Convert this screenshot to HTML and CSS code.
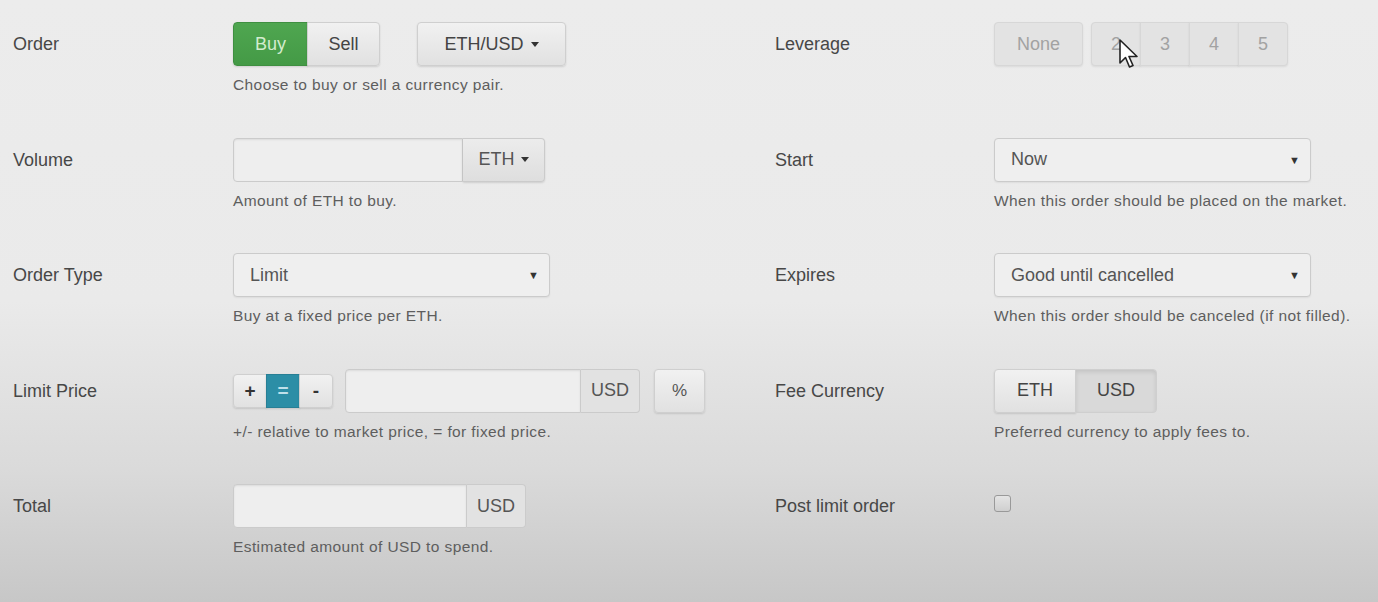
FILE: index.html
```html
<!DOCTYPE html>
<html lang="en">
<head>
  <meta charset="UTF-8" />
  <title>Place Order</title>
  <link rel="stylesheet" href="styles.css">
</head>
<body>

<div class="order-form">
  <div class="column">
    <div class="field">
      <div class="label">Order</div>
      <div class="control">
        <div class="line">
          <div class="btn-group">
            <button class="btn btn-success">Buy</button>
            <button class="btn">Sell</button>
          </div>
          <button class="btn pair-btn">ETH/USD <span class="caret"></span></button>
        </div>
        <div class="help">Choose to buy or sell a currency pair.</div>
      </div>
    </div>

    <div class="field">
      <div class="label">Volume</div>
      <div class="control">
        <div class="input-group w-volume">
          <input type="text" class="input">
          <button class="addon addon-btn">ETH <span class="caret"></span></button>
        </div>
        <div class="help">Amount of ETH to buy.</div>
      </div>
    </div>

    <div class="field">
      <div class="label">Order Type</div>
      <div class="control">
        <div class="select w-select">Limit <span class="arrow">▼</span></div>
        <div class="help">Buy at a fixed price per ETH.</div>
      </div>
    </div>

    <div class="field">
      <div class="label">Limit Price</div>
      <div class="control">
        <div class="line">
          <div class="btn-group btn-group-sm">
            <button class="btn">+</button>
            <button class="btn btn-info">=</button>
            <button class="btn">-</button>
          </div>
          <div class="input-group w-price">
            <input type="text" class="input">
            <span class="addon">USD</span>
          </div>
          <button class="btn pct-btn">%</button>
        </div>
        <div class="help">+/- relative to market price, = for fixed price.</div>
      </div>
    </div>

    <div class="field">
      <div class="label">Total</div>
      <div class="control">
        <div class="input-group w-total">
          <input type="text" class="input">
          <span class="addon">USD</span>
        </div>
        <div class="help">Estimated amount of USD to spend.</div>
      </div>
    </div>
  </div>

  <div class="column">
    <div class="field">
      <div class="label">Leverage</div>
      <div class="control">
        <div class="line lev-line">
          <button class="btn btn-disabled lev-none">None</button>
          <div class="btn-group">
            <button class="btn btn-disabled lev-num">2</button>
            <button class="btn btn-disabled lev-num">3</button>
            <button class="btn btn-disabled lev-num">4</button>
            <button class="btn btn-disabled lev-num">5</button>
          </div>
        </div>
      </div>
    </div>

    <div class="field">
      <div class="label">Start</div>
      <div class="control">
        <div class="select w-select">Now <span class="arrow">▼</span></div>
        <div class="help">When this order should be placed on the market.</div>
      </div>
    </div>

    <div class="field">
      <div class="label">Expires</div>
      <div class="control">
        <div class="select w-select">Good until cancelled <span class="arrow">▼</span></div>
        <div class="help">When this order should be canceled (if not filled).</div>
      </div>
    </div>

    <div class="field">
      <div class="label">Fee Currency</div>
      <div class="control">
        <div class="btn-group">
          <button class="btn fee-btn">ETH</button>
          <button class="btn fee-btn btn-active">USD</button>
        </div>
        <div class="help">Preferred currency to apply fees to.</div>
      </div>
    </div>

    <div class="field">
      <div class="label">Post limit order</div>
      <div class="control">
        <span class="checkbox"></span>
      </div>
    </div>
  </div>
</div>

<!-- mouse pointer over the leverage buttons -->
<svg class="cursor" width="22" height="32" viewBox="0 0 22 32">
  <path d="M1 1 L1 24 L6.5 18.5 L10.5 28 L14 26.5 L10 17.5 L18 17.5 Z" fill="#fff" stroke="#222" stroke-width="1.6" stroke-linejoin="round"/>
</svg>

</body>
</html>
```

FILE: styles.css
```css
body {
  margin: 0;
  height: 602px;
  overflow: hidden;
  font-family: "Liberation Sans", Arial, sans-serif;
  color: #444;
  background: linear-gradient(to bottom, #ececec 0%, #eaeaea 50%, #dadada 78%, #c7c7c7 100%);
}

.order-form {
  display: grid;
  grid-template-columns: 762px 1fr;
  padding: 22px 0 0 13px;
}

.field {
  display: flex;
  align-items: flex-start;
  height: 115.5px;
}

.label {
  width: 220px;
  flex: none;
  font-size: 18px;
  line-height: 44px;
  color: #474747;
}

.column + .column .label {
  width: 219px;
}

.line {
  display: flex;
  align-items: center;
  height: 44px;
}

.help {
  margin-top: 9px;
  font-size: 15.5px;
  letter-spacing: 0.4px;
  line-height: 20px;
  color: #5e5e5e;
}

/* buttons */
.btn {
  font-family: inherit;
  font-size: 18px;
  height: 44px;
  padding: 0 14px;
  color: #444;
  background: linear-gradient(to bottom, #f1f1f1, #e1e1e1);
  border: 1px solid #cfcfcf;
  border-radius: 4px;
  box-shadow: 0 1px 2px rgba(0,0,0,0.12);
}

.btn-group {
  display: flex;
}

.btn-group .btn {
  border-radius: 0;
  margin-left: -1px;
}

.btn-group .btn:first-child {
  border-radius: 4px 0 0 4px;
  margin-left: 0;
}

.btn-group .btn:last-child {
  border-radius: 0 4px 4px 0;
}

.btn-success {
  width: 75px;
  background: linear-gradient(to bottom, #4fa650, #449a46);
  border-color: #3f8f41;
  color: #d3ecce;
}

.btn-success + .btn {
  width: 73px;
}

.pair-btn {
  margin-left: 37px;
  width: 149px;
}

.caret {
  display: inline-block;
  vertical-align: middle;
  margin-left: 2px;
  border-top: 5px solid #333;
  border-left: 4px solid transparent;
  border-right: 4px solid transparent;
}

.addon-btn .caret {
  margin-left: 6px;
}

.btn-group-sm .btn {
  height: 34px;
  width: 34px;
  padding: 0;
  font-size: 19px;
  font-weight: bold;
  color: #333;
}

.btn-info {
  background: #2c8ea6;
  border-color: #287f95;
  color: #bfe0ea !important;
}

.pct-btn {
  width: 51px;
  margin-left: 14px;
  padding: 0;
  font-size: 17px;
  color: #555;
}

.btn-disabled {
  color: #a2a2a2;
  background: #e3e3e3;
  border-color: #d7d7d7;
  box-shadow: 0 1px 2px rgba(0,0,0,0.08);
}

.lev-none {
  width: 89px;
  margin-right: 8px;
}

.lev-num {
  width: 50px;
  padding: 0;
}

.fee-btn {
  width: 82px;
  padding: 0;
  font-size: 18px;
}

.btn-active {
  background: #d9d9d9;
  box-shadow: inset 0 2px 4px rgba(0,0,0,0.1);
}

/* inputs */
.input-group {
  display: flex;
  height: 44px;
}

.input {
  flex: 1;
  min-width: 0;
  height: 44px;
  box-sizing: border-box;
  background: #eeeeee;
  border: 1px solid #cbcbcb;
  border-radius: 4px 0 0 4px;
  box-shadow: inset 0 1px 2px rgba(0,0,0,0.08);
}

.addon {
  display: flex;
  align-items: center;
  justify-content: center;
  box-sizing: border-box;
  height: 44px;
  padding: 0 10px;
  font-family: inherit;
  font-size: 18px;
  color: #555;
  background: #e2e2e2;
  border: 1px solid #cbcbcb;
  border-left: none;
  border-radius: 0 4px 4px 0;
}

.addon-btn {
  width: 82px;
  background: linear-gradient(to bottom, #ececec, #dedede);
  box-shadow: 0 1px 2px rgba(0,0,0,0.12);
}

.w-volume { width: 312px; }
.w-price { width: 295px; margin-left: 12px; }
.w-total { width: 293px; }

.select {
  display: flex;
  align-items: center;
  justify-content: space-between;
  box-sizing: border-box;
  height: 44px;
  padding: 0 10px 0 16px;
  font-size: 18px;
  color: #555;
  background: #efefef;
  border: 1px solid #cbcbcb;
  border-radius: 4px;
  box-shadow: 0 1px 2px rgba(0,0,0,0.06);
}

.w-select { width: 317px; }

.arrow {
  font-size: 11px;
  color: #333;
}

.checkbox {
  display: block;
  width: 17px;
  height: 17px;
  margin-top: 11px;
  box-sizing: border-box;
  border: 1px solid #999;
  border-radius: 3px;
  background: linear-gradient(to bottom, #e4e4e4, #cfcfcf);
}

.cursor {
  position: absolute;
  left: 1119px;
  top: 39px;
}
```
